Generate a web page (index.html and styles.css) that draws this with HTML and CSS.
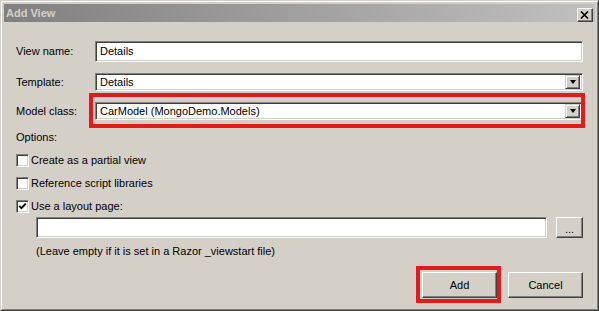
FILE: index.html
```html
<!DOCTYPE html>
<html>
<head>
<meta charset="utf-8">
<title>Add View</title>
<link rel="stylesheet" href="styles.css">
</head>
<body>
<div class="window">
  <div class="frame">
    <div class="titlebar">
      <span class="title">Add View</span>
      <span class="close">
        <svg width="9" height="8" viewBox="0 0 9 8"><path d="M1 0.5 L8 7.5 M8 0.5 L1 7.5" stroke="#000" stroke-width="1.6" fill="none"/></svg>
      </span>
    </div>
    <div class="content">
      <div class="form">
        <span class="lbl">View name:</span>
        <div class="textbox">Details</div>
        <span class="lbl">Template:</span>
        <div class="combo">Details<span class="drop"><span class="arrow"></span></span></div>
        <span class="lbl">Model class:</span>
        <div class="combo marked">CarModel (MongoDemo.Models)<span class="drop"><span class="arrow"></span></span></div>
      </div>
      <div class="options">Options:</div>
      <div class="checks">
        <div class="check-row"><span class="box"></span><span>Create as a partial view</span></div>
        <div class="check-row"><span class="box"></span><span>Reference script libraries</span></div>
        <div class="check-row"><span class="box"><svg width="9" height="9" viewBox="0 0 9 9"><path d="M1.2 3.8 L3.4 6.2 L7.8 1.6" stroke="#000" stroke-width="1.9" fill="none"/></svg></span><span>Use a layout page:</span></div>
      </div>
      <div class="layout-row">
        <div class="textbox layout-input"></div>
        <span class="btn browse">...</span>
      </div>
      <div class="hint">(Leave empty if it is set in a Razor _viewstart file)</div>
      <div class="buttons">
        <span class="btn action marked-btn">Add</span>
        <span class="btn action">Cancel</span>
      </div>
    </div>
  </div>
</div>
</body>
</html>
```
FILE: styles.css
```css
* { box-sizing: border-box; }
html, body { margin: 0; padding: 0; background: #d4d0c8; }
body {
  font-family: "Liberation Sans", Arial, sans-serif;
  font-size: 11px;
  color: #000;
}
.window {
  width: 599px;
  height: 311px;
  border: 1px solid;
  border-color: #d4d0c8 #404040 #404040 #d4d0c8;
  background: #d4d0c8;
}
.frame {
  height: 100%;
  border: 1px solid;
  border-color: #ffffff #808080 #808080 #ffffff;
  padding: 2px;
}
.titlebar {
  height: 18px;
  background: linear-gradient(to right, #808080, #c0c0c0);
  display: flex;
  align-items: flex-start;
  justify-content: space-between;
  padding: 0 2px 0 2px;
}
.title {
  font-weight: bold;
  color: #d4d0c8;
  line-height: 18px;
  font-size: 11px;
}
.close {
  margin-top: 4px;
  width: 16px;
  height: 14px;
  background: #d4d0c8;
  border: 1px solid;
  border-color: #ffffff #404040 #404040 #ffffff;
  box-shadow: inset -1px -1px #808080;
  display: flex;
  align-items: center;
  justify-content: center;
  padding: 0 1px 1px 0;
}
.close svg { display: block; }
.content {
  padding: 19px 12px 0 12px;
}
.form {
  display: grid;
  grid-template-columns: 79px 1fr;
  row-gap: 11px;
  align-items: center;
}
.lbl { line-height: 13px; }
.textbox, .combo {
  background: #fff;
  border: 1px solid;
  border-color: #808080 #ffffff #ffffff #808080;
  box-shadow: inset 1px 1px #404040, inset -1px -1px #d4d0c8;
  padding-left: 4px;
  white-space: nowrap;
}
.textbox {
  height: 21px;
  line-height: 19px;
}
.combo {
  height: 18px;
  line-height: 16px;
  position: relative;
  display: flex;
  justify-content: space-between;
  padding-right: 2px;
}
.drop {
  margin-top: 1px;
  width: 15px;
  height: 14px;
  background: #d4d0c8;
  border: 1px solid;
  border-color: #d4d0c8 #404040 #404040 #d4d0c8;
  box-shadow: inset 1px 1px #fff, inset -1px -1px #808080;
  display: flex;
  align-items: center;
  justify-content: center;
}
.arrow {
  width: 0;
  height: 0;
  border-left: 3.5px solid transparent;
  border-right: 3.5px solid transparent;
  border-top: 4px solid #000;
}
.marked::after {
  content: "";
  position: absolute;
  left: -7px;
  right: -3px;
  top: -10px;
  bottom: -9px;
  border: 4px solid #e01b1b;
  pointer-events: none;
}
.options {
  margin-top: 11px;
  line-height: 13px;
}
.checks {
  margin-top: 10px;
  display: flex;
  flex-direction: column;
  gap: 10px;
}
.check-row {
  display: flex;
  align-items: center;
  gap: 2px;
  height: 13px;
  line-height: 13px;
}
.box {
  width: 13px;
  height: 13px;
  background: #fff;
  border: 1px solid;
  border-color: #808080 #ffffff #ffffff #808080;
  box-shadow: inset 1px 1px #404040, inset -1px -1px #d4d0c8;
  display: flex;
  align-items: center;
  justify-content: center;
}
.box svg { display: block; }
.layout-row {
  margin-top: 4px;
  padding-left: 20px;
  display: flex;
  gap: 9px;
}
.layout-input { flex: 1; }
.btn {
  background: #d4d0c8;
  border: 1px solid;
  border-color: #ffffff #404040 #404040 #ffffff;
  box-shadow: inset -1px -1px #808080;
  display: flex;
  align-items: center;
  justify-content: center;
}
.browse {
  width: 27px;
  height: 21px;
  padding-top: 2px;
}
.hint {
  margin-top: 7px;
  padding-left: 20px;
  line-height: 13px;
}
.buttons {
  margin-top: 14px;
  display: flex;
  justify-content: flex-end;
  gap: 11px;
}
.action {
  width: 75px;
  height: 26px;
}
.marked-btn { position: relative; }
.marked-btn::after {
  content: "";
  position: absolute;
  left: -7px;
  right: -5px;
  top: -7px;
  bottom: -6px;
  border: 4px solid #e01b1b;
  pointer-events: none;
}
```
